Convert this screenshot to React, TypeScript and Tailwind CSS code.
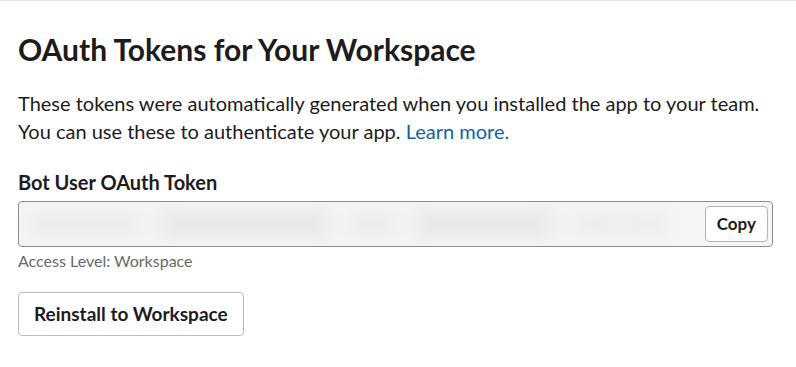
import React from "react";

export default function App() {
  return (
    <div className="w-[796px] h-[367px] bg-white border-t border-[#e8e8e8] overflow-hidden" style={{ fontFamily: "Lato, 'Noto Sans', sans-serif" }}>
      <div className="flex flex-col items-start pl-[18px] pt-[28px] text-[#1d1c1d]">
        <h2 className="text-[30px] font-bold leading-[40px]">OAuth Tokens for Your Workspace</h2>
        <p className="mt-[20px] text-[20px] leading-[28px]">
          These tokens were automatically generated when you installed the app to your team.
          <br />
          You can use these to authenticate your app. <a className="text-[#1264a3]">Learn more.</a>
        </p>
        <div className="mt-[25px] text-[20px] font-bold leading-[24px]">Bot User OAuth Token</div>
        <div className="mt-[7px] w-[755px] h-[46px] border border-[#8d8d8d] rounded-[4px] bg-[#f5f5f5] flex items-center gap-[8px] pl-[10px] pr-[4px] overflow-hidden">
          <div className="flex-1 min-w-0 flex items-center gap-[16px] blur-[10px] pr-[30px] overflow-hidden">
            <div className="flex-[14] h-[18px] bg-[#e8e8e8] rounded-full" />
            <div className="flex-[22] h-[20px] bg-[#e3e3e3] rounded-full" />
            <div className="flex-[6] h-[18px] bg-[#e8e8e8] rounded-full" />
            <div className="flex-[18] h-[20px] bg-[#e3e3e3] rounded-full" />
            <div className="flex-[12] h-[18px] bg-[#eaeaea] rounded-full" />
          </div>
          <button className="shrink-0 h-[36px] px-[11px] bg-white border border-[#b5b5b5] rounded-[4px] text-[17px] font-bold text-[#1d1c1d]">Copy</button>
        </div>
        <div className="mt-[4px] text-[16px] leading-[20px] text-[#696969]">Access Level: Workspace</div>
        <button className="mt-[21px] h-[44px] px-[15px] border border-[#bcbcbc] rounded-[4px] bg-white text-[19px] font-bold text-[#1d1c1d]">Reinstall to Workspace</button>
      </div>
    </div>
  );
}
